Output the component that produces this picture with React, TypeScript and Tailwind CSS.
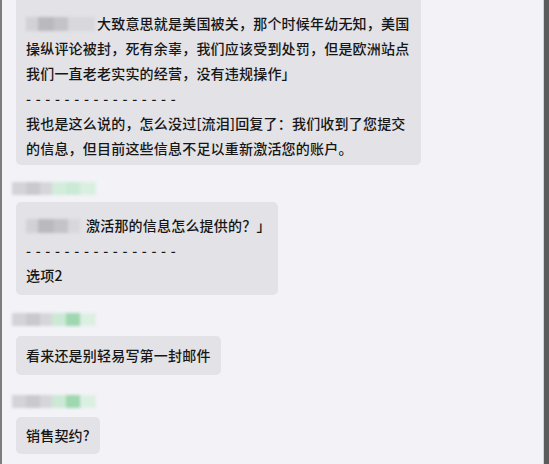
import type { ReactNode } from 'react';

/** Blurred name label above a message (the original was pixelated out) */
function BlurredName({ strong = false }: { strong?: boolean }) {
  return (
    <div className="ml-[-4px] flex h-[13px] w-[84px] blur-[1.5px]">
      <div className="w-[14px] bg-[#d3d3d8]" />
      <div className="w-[14px] bg-[#c9c9ce]" />
      <div className="w-[12px] bg-[#d6d6da]" />
      {strong ? (
        <>
          <div className="w-[14px] bg-[#cde8d6]" />
          <div className="w-[14px] bg-[#9ed7b0]" />
          <div className="w-[16px] bg-[#dcefe3]" />
        </>
      ) : (
        <>
          <div className="w-[14px] bg-[#d3ecdc]" />
          <div className="w-[14px] bg-[#cbead6]" />
          <div className="w-[16px] bg-[#d9efe1]" />
        </>
      )}
    </div>
  );
}

/** Blurred quoted-user avatar inside a bubble */
function BlurredQuote({ width }: { width: number }) {
  return (
    <span className="inline-flex h-[14px] items-stretch align-[-2px] blur-[1.5px]" style={{ width }}>
      <span className="w-[12px] bg-[#d2d2d6]" />
      <span className="w-[16px] bg-[#b9b9be]" />
      <span className="w-[14px] bg-[#c4c4c8]" />
      <span className="flex-1 bg-[#d8d8dc]" />
    </span>
  );
}

function Bubble({ className = '', children }: { className?: string; children: ReactNode }) {
  return (
    <div className={`whitespace-nowrap rounded-[5px] bg-[#e2e2e7] px-[10px] text-[14px] font-medium leading-[25px] tracking-[0.2px] text-[#161616] ${className}`}>
      {children}
    </div>
  );
}

const Dashes = () => (
  <div className="tracking-[0.75px]">- - - - - - - - - - - - - - - -</div>
);

export default function App() {
  return (
    <div
      className="flex h-[464px] w-[549px] overflow-hidden bg-[#f3f3f7]"
      style={{ fontFamily: '"Noto Sans CJK SC", "Noto Sans", sans-serif' }}
    >
      <div className="w-[2px] shrink-0 bg-[#7d7d7d]" />

      <div className="flex flex-1 flex-col items-start pl-[14px]">
        <Bubble className="w-[405px] rounded-t-none pt-[11px] pb-[4px]">
          <div>
            <BlurredQuote width={69} />
            <span className="ml-[2px]">大致意思就是美国被关，那个时候年幼无知，美国</span>
          </div>
          <div>操纵评论被封，死有余辜，我们应该受到处罚，但是欧洲站点</div>
          <div>我们一直老老实实的经营，没有违规操作」</div>
          <Dashes />
          <div>我也是这么说的，怎么没过[流泪]回复了：我们收到了您提交</div>
          <div>的信息，但目前这些信息不足以重新激活您的账户。</div>
        </Bubble>

        <div className="mt-[17px]">
          <BlurredName />
        </div>
        <Bubble className="mt-[7px] w-[262px] pt-[11px] pb-[7px] pr-[6px] leading-[24px]">
          <div>
            <BlurredQuote width={54} />
            <span className="ml-[6px]">激活那的信息怎么提供的？」</span>
          </div>
          <Dashes />
          <div>选项2</div>
        </Bubble>

        <div className="mt-[18px]">
          <BlurredName strong />
        </div>
        <Bubble className="mt-[10px] py-[7px]">看来还是别轻易写第一封邮件</Bubble>

        <div className="mt-[20px]">
          <BlurredName strong />
        </div>
        <Bubble className="mt-[9px] py-[6px]">销售契约?</Bubble>
      </div>

      <div className="w-px shrink-0 bg-[#cfcfd4]" />
      <div className="w-[5px] shrink-0 bg-[#5b5b5b]" />
    </div>
  );
}
